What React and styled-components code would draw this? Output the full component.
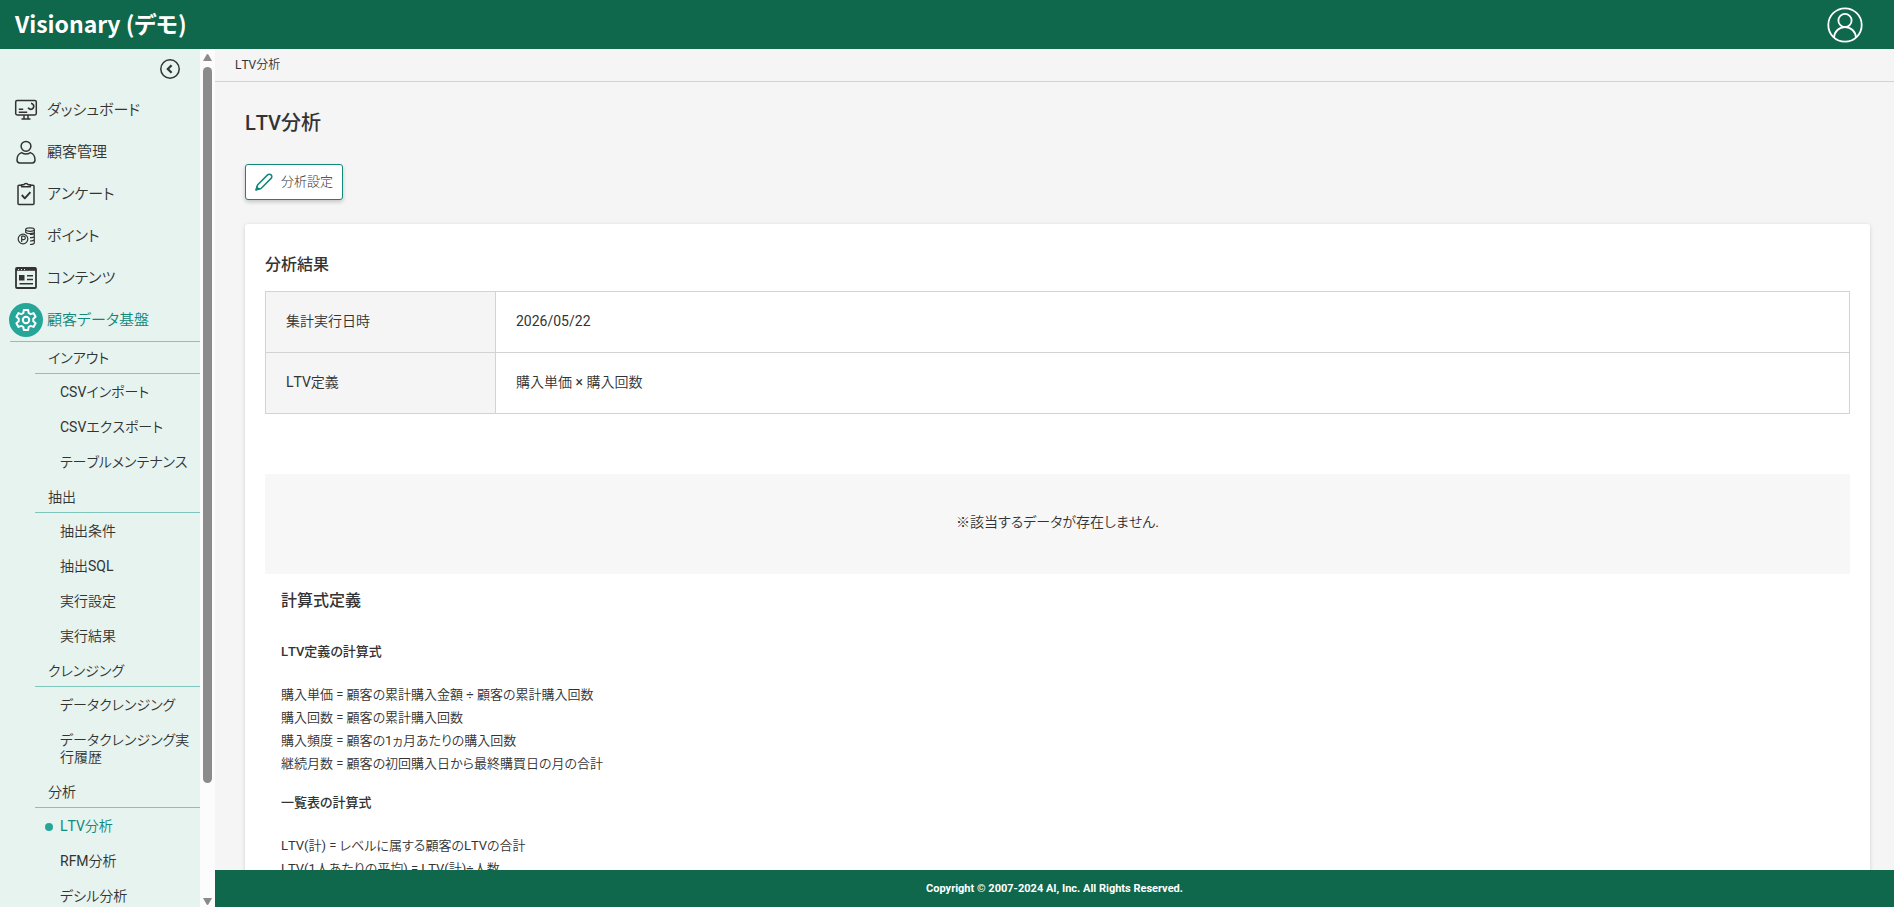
import React, { useState } from 'react'
import styled, { createGlobalStyle, css } from 'styled-components'

const sections = [
  { title: 'インアウト', items: ['CSVインポート', 'CSVエクスポート', 'テーブルメンテナンス'] },
  { title: '抽出', items: ['抽出条件', '抽出SQL', '実行設定', '実行結果'] },
  { title: 'クレンジング', items: ['データクレンジング', 'データクレンジング実行履歴'] },
  { title: '分析', items: ['LTV分析', 'RFM分析', 'デシル分析'] },
]

const formulas = [
  {
    title: 'LTV定義の計算式',
    lines: [
      '購入単価 = 顧客の累計購入金額 ÷ 顧客の累計購入回数',
      '購入回数 = 顧客の累計購入回数',
      '購入頻度 = 顧客の1ヵ月あたりの購入回数',
      '継続月数 = 顧客の初回購入日から最終購買日の月の合計',
    ],
  },
  {
    title: '一覧表の計算式',
    lines: [
      'LTV(計) = レベルに属する顧客のLTVの合計',
      'LTV(1人あたりの平均) = LTV(計)÷人数',
    ],
  },
]

const textFont = 'Roboto, "Noto Sans CJK JP DemiLight", "Noto Sans CJK JP", sans-serif'
const headingFont = 'Roboto, "Noto Sans CJK JP", sans-serif'

const DashboardIcon = () => (
  <Icon viewBox="0 0 24 24">
    <rect x="1.700" y="2.500" width="20.600" height="14.500" rx="1.400" />
    <path d="M10 17v3.600M14 17v3.600M7.500 21h9M4.800 11.200h4.400M4.800 14.200h8.400" />
    <path d="M17 5.300a3 3 0 1 1-2.900 4.400" strokeWidth="1.700" />
  </Icon>
)

const UserIcon = () => (
  <Icon viewBox="0 0 24 24">
    <circle cx="12" cy="6.300" r="4.900" />
    <path d="M7.600 12.600C4.600 13.600 3 16.400 3 20c0 2 1 2.900 2.800 2.900h12.400c1.800 0 2.800-.9 2.800-2.900 0-3.600-1.600-6.400-4.600-7.400-2.700 1.700-6.100 1.700-8.800 0z" />
  </Icon>
)

const SurveyIcon = () => (
  <Icon viewBox="0 0 24 24">
    <path d="M7.500 3.200H5a1 1 0 0 0-1 1v17.400a1 1 0 0 0 1 1h14a1 1 0 0 0 1-1V4.200a1 1 0 0 0-1-1h-2.500" />
    <path d="M7.600 4.800V2.800h2.200c.6-1.800 3.800-1.800 4.400 0h2.200v2z" />
    <path d="m7.800 13 3 3.300 5.600-6.200" strokeWidth="1.900" />
  </Icon>
)

const PointIcon = () => (
  <Icon viewBox="0 0 24 24" $stroke={1.2}>
    <ellipse cx="16" cy="5.600" rx="4.300" ry="1.700" />
    <path d="M11.700 5.600v3M20.300 5.600v13.200c0 1-2 1.700-4.300 1.700M20.300 8.800c0 1-2 1.700-4.300 1.700M20.300 12c0 1-2 1.700-4.300 1.700M20.300 15.300c0 1-2 1.700-4.300 1.700" />
    <path d="M11.700 8c0 1.400 4.300 2.400 8.600.8" />
    <circle cx="9" cy="15" r="4.800" />
    <path d="M7.700 18v-5.800h1.900a1.700 1.700 0 0 1 0 3.400H7.700" />
  </Icon>
)

const ContentIcon = () => (
  <Icon viewBox="0 0 24 24">
    <rect x="2" y="2" width="20" height="20" rx="1" strokeWidth="1.800" />
    <path d="M2 3.300h20" strokeWidth="3" />
    <path d="M4 3.500h1M7 3.500h1M10 3.500h1" stroke="#e6f3ef" strokeWidth="1" />
    <path d="M5 9h5.500v5.500H5z" fill="currentColor" stroke="none" />
    <path d="M13 9.800h6M13 13.600h6M5.500 17.800h13.500" />
  </Icon>
)

const GearIcon = () => (
  <Icon viewBox="0 0 24 24" $stroke={2}>
    <circle cx="12" cy="12" r="3.200" />
    <path d="M9.900 2h4.200l.6 3 1.900 1.100 2.900-1 2.100 3.700-2.300 2v2.400l2.300 2-2.100 3.700-2.900-1-1.900 1.100-.6 3H9.900l-.6-3-1.900-1.100-2.900 1-2.100-3.700 2.300-2v-2.400l-2.300-2 2.100-3.700 2.900 1L9.300 5z" />
  </Icon>
)

const menus = [
  { label: 'ダッシュボード', icon: <DashboardIcon /> },
  { label: '顧客管理', icon: <UserIcon /> },
  { label: 'アンケート', icon: <SurveyIcon /> },
  { label: 'ポイント', icon: <PointIcon /> },
  { label: 'コンテンツ', icon: <ContentIcon /> },
  { label: '顧客データ基盤', icon: <GearIcon />, active: true },
]

function App() {
  const [ current, setCurrent ] = useState('LTV分析')

  return (
    <Page>
      <GlobalStyle />
      <Header>
        <Brand href="#top">Visionary (デモ)</Brand>
        <AccountButton type="button" aria-label="アカウント">
          <svg viewBox="0 0 36 36" width="36" height="36" fill="none" stroke="#fff" strokeWidth="1.800">
            <circle cx="18" cy="18" r="16.700" />
            <circle cx="18" cy="13.500" r="6.600" />
            <path d="M7 30.500c.5-6.200 5-10.400 11-10.400s10.500 4.200 11 10.400" />
          </svg>
        </AccountButton>
      </Header>
      <Body>
        <Sidebar>
          <SidebarTop>
            <CollapseButton type="button" aria-label="メニューを閉じる">
              <svg viewBox="0 0 20 20" width="20" height="20" fill="none" stroke="currentColor">
                <circle cx="10" cy="10" r="9.200" strokeWidth="1.500" />
                <path d="M11.600 6.200 7.800 10l3.800 3.800" strokeWidth="2.200" />
              </svg>
            </CollapseButton>
          </SidebarTop>
          { menus.map((menu) => (
            <MenuLink key={menu.label} href="#menu" $active={menu.active}>
              <IconWrap $active={menu.active}>{menu.icon}</IconWrap>
              {menu.label}
            </MenuLink>
          ))}
          <SubMenu>
            { sections.map((section) => (
              <li key={section.title}>
                <SectionTitle>{section.title}</SectionTitle>
                <SectionList>
                  { section.items.map((item) => (
                    <li key={item}>
                      <SubLink href="#sub" $active={item === current} onClick={ () => setCurrent(item) }>
                        {item}
                      </SubLink>
                    </li>
                  ))}
                </SectionList>
              </li>
            ))}
          </SubMenu>
        </Sidebar>
        <ScrollBar aria-hidden="true">
          <Arrow viewBox="0 0 9 7"><path d="M3.500.8a1.200 1.200 0 0 1 2 0L9 7H0z" /></Arrow>
          <Track><Thumb /></Track>
          <Arrow viewBox="0 0 9 7"><path d="M3.500 6.200a1.200 1.200 0 0 0 2 0L9 0H0z" /></Arrow>
        </ScrollBar>
        <Main>
          <Scroll>
            <Breadcrumb>LTV分析</Breadcrumb>
            <Content>
              <Title>LTV分析</Title>
              <SettingButton type="button">
                <svg viewBox="0 0 18 18" width="18" height="18" fill="none" stroke="#12877b" strokeWidth="1.500">
                  <path d="M1.200 16.800 2.500 12 12.600 1.900a2.400 2.400 0 0 1 3.500 3.500L6 15.500z" strokeLinejoin="round" />
                  <path d="m1.200 16.800.700-2.600 1.900 1.900z" fill="#12877b" />
                </svg>
                分析設定
              </SettingButton>
              <Card>
                <CardTitle>分析結果</CardTitle>
                <ResultTable>
                  <tbody>
                    <tr>
                      <th scope="row">集計実行日時</th>
                      <td>2026/05/22</td>
                    </tr>
                    <tr>
                      <th scope="row">LTV定義</th>
                      <td>購入単価 × 購入回数</td>
                    </tr>
                  </tbody>
                </ResultTable>
                <Empty>※該当するデータが存在しません.</Empty>
                <Definition>
                  <CardTitle>計算式定義</CardTitle>
                  { formulas.map((group) => (
                    <React.Fragment key={group.title}>
                      <GroupTitle>{group.title}</GroupTitle>
                      { group.lines.map((line) => <Formula key={line}>{line}</Formula>) }
                    </React.Fragment>
                  ))}
                </Definition>
              </Card>
            </Content>
          </Scroll>
          <Footer>Copyright © 2007-2024 AI, Inc. All Rights Reserved.</Footer>
        </Main>
      </Body>
    </Page>
  )
}

export default App

const GlobalStyle = createGlobalStyle`
  * {
    box-sizing: border-box;
  }

  body {
    margin: 0;
    color: #333;
    font-family: ${textFont};
    font-size: 14px;
    font-weight: 400;
    font-feature-settings: "palt";
    font-kerning: none;
  }

  h1, h2, h3, p, ul {
    margin: 0;
    padding: 0;
  }

  ul {
    list-style: none;
  }

  a {
    color: inherit;
    text-decoration: none;
  }

  button {
    font: inherit;
    font-feature-settings: inherit;
    font-kerning: inherit;
    color: inherit;
    cursor: pointer;
  }
`
const Page = styled.div`
  display: flex;
  flex-direction: column;
  height: 100vh;
`
const Header = styled.header`
  display: flex;
  flex: none;
  align-items: center;
  justify-content: space-between;
  height: 49px;
  padding: 0 31px 0 15px;
  background: #0f674c;
`
const Brand = styled.a`
  padding-bottom: 4px;
  color: #fff;
  font-family: "Noto Sans CJK JP", sans-serif;
  font-size: 23px;
  font-weight: 700;
  line-height: 44px;
`
const AccountButton = styled.button`
  display: flex;
  padding: 0;
  border: 0;
  background: none;
`
const Body = styled.div`
  display: flex;
  flex: 1;
  min-height: 0;
`
const Sidebar = styled.nav`
  flex: none;
  width: 200px;
  overflow: hidden;
  background: #e6f3ef;
`
const SidebarTop = styled.div`
  display: flex;
  justify-content: flex-end;
  height: 40px;
  padding: 10px 20px;
`
const CollapseButton = styled.button`
  display: flex;
  padding: 0;
  border: 0;
  background: none;
`
const MenuLink = styled.a`
  display: flex;
  align-items: center;
  gap: 4px;
  height: 42px;
  padding-left: 9px;
  font-size: 15px;
  line-height: 20px;
  color: ${ props => props.$active ? '#12877b' : '#333' };
`
const IconWrap = styled.span`
  display: flex;
  align-items: center;
  justify-content: center;
  width: 34px;
  height: 34px;
  border-radius: 50%;
  ${ props => props.$active && css`
    color: #fff;
    background: #26a699;
  `}
`
const Icon = styled.svg`
  width: 24px;
  height: 24px;
  fill: none;
  stroke: currentColor;
  stroke-width: ${ props => props.$stroke || 1.5 };
  stroke-linejoin: round;
`
const SubMenu = styled.ul`
  margin-left: 10px;
  border-top: 1px solid #80c6bd;
`
const SectionTitle = styled.h2`
  height: 32px;
  margin-left: 25px;
  padding-left: 13px;
  border-bottom: 1px solid #80c6bd;
  font-size: 14px;
  font-weight: 400;
  line-height: 32px;
`
const SectionList = styled.ul`
  padding: 1px 0;
`
const SubLink = styled.a`
  position: relative;
  display: block;
  padding: 9px 10px 9px 50px;
  line-height: 17px;
  color: ${ props => props.$active ? '#12877b' : '#333' };

  ${ props => props.$active && css`
    &::before {
      content: '';
      position: absolute;
      top: 14px;
      left: 35px;
      width: 8px;
      height: 8px;
      border-radius: 50%;
      background: #26a699;
    }
  `}
`
const ScrollBar = styled.div`
  display: flex;
  flex: none;
  flex-direction: column;
  align-items: center;
  width: 15px;
  padding: 5px 0 2px;
  background: #fcfcfc;
`
const Arrow = styled.svg`
  flex: none;
  width: 9px;
  height: 7px;
  fill: #8b8b8b;
`
const Track = styled.div`
  flex: 1;
  width: 9px;
  padding: 6px 0 8px;
`
const Thumb = styled.div`
  height: 87%;
  border-radius: 5px;
  background: #8b8b8b;
`
const Main = styled.main`
  display: flex;
  flex: 1;
  flex-direction: column;
  min-width: 0;
  background: #f5f5f5;
`
const Scroll = styled.div`
  flex: 1;
  min-height: 0;
  overflow-y: auto;
  scrollbar-width: none;
`
const Breadcrumb = styled.div`
  height: 33px;
  padding-left: 20px;
  border-bottom: 1px solid #d3d3d3;
  font-size: 12px;
  line-height: 32px;
`
const Content = styled.div`
  padding: 26px 24px 30px 30px;
`
const Title = styled.h1`
  font-family: ${headingFont};
  font-size: 20px;
  font-weight: 500;
  line-height: 30px;
`
const SettingButton = styled.button`
  display: flex;
  align-items: center;
  gap: 8px;
  height: 36px;
  margin: 26px 0 24px;
  padding: 0 9px;
  border: 1px solid #12877b;
  border-radius: 3px;
  background: #fff;
  box-shadow: 0 2px 4px rgba(0, 0, 0, .2);
  font-family: ${headingFont};
  font-size: 13px;
  font-weight: 300;
  line-height: 20px;
`
const Card = styled.section`
  padding: 28px 20px 40px;
  border-radius: 3px;
  background: #fff;
  box-shadow: 0 1px 4px rgba(0, 0, 0, .15);
`
const CardTitle = styled.h2`
  font-family: ${headingFont};
  font-size: 16px;
  font-weight: 500;
  line-height: 26px;
`
const ResultTable = styled.table`
  width: 100%;
  margin: 13px 0 60px;
  border-collapse: collapse;

  th, td {
    height: 61px;
    padding: 0 20px 2px;
    border: 1px solid #d3d3d3;
    font-weight: 400;
    line-height: 20px;
    text-align: left;
  }

  th {
    width: 230px;
    background: #f5f5f5;
  }
`
const Empty = styled.p`
  padding: 36px 0 40px;
  background: #f7f7f7;
  line-height: 24px;
  text-align: center;
`
const Definition = styled.div`
  padding: 14px 16px;
`
const GroupTitle = styled.h3`
  padding: 26px 0 20px;
  font-family: ${headingFont};
  font-size: 13px;
  font-weight: 500;
  line-height: 23px;

  p + & {
    padding-top: 16px;
  }
`
const Formula = styled.p`
  font-size: 13px;
  line-height: 23px;
`
const Footer = styled.footer`
  flex: none;
  height: 37px;
  color: #fff;
  background: #0f674c;
  font-size: 11px;
  font-weight: 700;
  line-height: 38px;
  text-align: center;
`
